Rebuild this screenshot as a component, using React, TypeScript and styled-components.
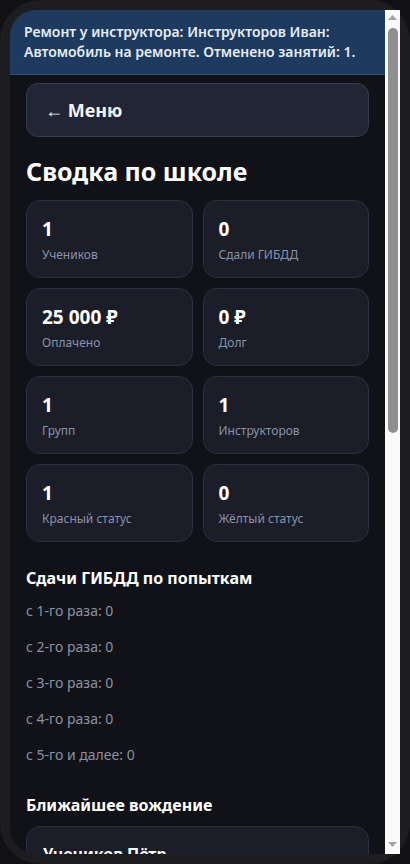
import React from "react";
import styled, { createGlobalStyle } from "styled-components";

const Global = createGlobalStyle`
  html, body { margin: 0; padding: 0; background: #111113; }
  * { box-sizing: border-box; }
  body { font-family: "Noto Sans", "Open Sans", Arial, sans-serif; }
`;

const Frame = styled.div`
  width: 410px;
  height: 864px;
  padding: 10px;
  border-radius: 40px;
  background: #1d1d21;
`;

const Screen = styled.div`
  height: 844px;
  display: flex;
`;

const ScrollArea = styled.div`
  flex: 1;
  min-width: 0;
  overflow-y: auto;
  scrollbar-width: none;
  border-radius: 26px 0 0 26px;
  background: #111217;
  color: #f1f3f8;
  &::-webkit-scrollbar { display: none; }
`;

const Track = styled.div`
  width: 15px;
  flex: none;
  background: #fafafa;
  display: flex;
  flex-direction: column;
  align-items: center;
`;

const ArrowButton = styled.div<{ $down?: boolean }>`
  height: 15px;
  width: 15px;
  flex: none;
  display: flex;
  align-items: ${(p) => (p.$down ? "flex-start" : "center")};
  padding-top: ${(p) => (p.$down ? "3px" : "0")};
  justify-content: center;
`;

const Thumb = styled.div`
  margin-top: 3px;
  width: 10px;
  height: 405px;
  border-radius: 5px;
  background: #8f8f8f;
`;

const Spacer = styled.div`
  flex: 1;
`;

const Banner = styled.div`
  padding: 12px 14px;
  background: #1e3a5f;
  border-bottom: 1px solid #2d5079;
  color: #e4ecf7;
  font-size: 14px;
  line-height: 20px;
  font-weight: 600;
`;

const Content = styled.div`
  padding: 8px 16px 24px;
  display: flex;
  flex-direction: column;
`;

const MenuButton = styled.button`
  display: block;
  width: 100%;
  text-align: left;
  padding: 14px 18px;
  border-radius: 12px;
  border: 1px solid #363b4d;
  background: #222533;
  color: #f1f3f8;
  font-family: inherit;
  font-size: 18px;
  line-height: 24px;
  font-weight: 700;
`;

const Title = styled.h1`
  margin: 18px 0 13px;
  font-size: 25px;
  line-height: 32px;
  font-weight: 700;
  color: #ffffff;
`;

const Grid = styled.div`
  display: grid;
  grid-template-columns: 1fr 1fr;
  gap: 10px;
`;

const Card = styled.div`
  padding: 15px 15px 13px;
  border-radius: 14px;
  border: 1px solid #2b2f40;
  background: #1b1d29;
  display: flex;
  flex-direction: column;
  gap: 4px;
`;

const Value = styled.div`
  font-size: 19px;
  line-height: 26px;
  font-weight: 700;
  color: #ffffff;
`;

const Label = styled.div`
  font-size: 12px;
  line-height: 18px;
  color: #8a93a8;
`;

const SectionTitle = styled.h2<{ $top: number }>`
  margin: ${(p) => p.$top}px 0 0;
  font-size: 16px;
  line-height: 22px;
  font-weight: 700;
  color: #ffffff;
`;

const List = styled.div`
  margin-top: 12px;
  display: flex;
  flex-direction: column;
  gap: 16px;
`;

const Item = styled.div`
  font-size: 14px;
  line-height: 20px;
  color: #8a91a3;
`;

const LessonCard = styled.div`
  margin-top: 10px;
  padding: 16px 16px 14px;
  border-radius: 14px;
  border: 1px solid #2b2f40;
  background: #1b1d29;
  display: flex;
  flex-direction: column;
  gap: 6px;
`;

const LessonName = styled.div`
  font-size: 16px;
  line-height: 22px;
  font-weight: 700;
  color: #ffffff;
`;

const LessonMeta = styled.div`
  font-size: 13px;
  line-height: 18px;
  color: #8a93a8;
`;

const stats = [
  ["1", "Учеников"],
  ["0", "Сдали ГИБДД"],
  ["25 000 ₽", "Оплачено"],
  ["0 ₽", "Долг"],
  ["1", "Групп"],
  ["1", "Инструкторов"],
  ["1", "Красный статус"],
  ["0", "Жёлтый статус"],
];

const attempts = [
  "с 1-го раза: 0",
  "с 2-го раза: 0",
  "с 3-го раза: 0",
  "с 4-го раза: 0",
  "с 5-го и далее: 0",
];

const lessons = [
  ["Учеников Пётр", "Инструктор: Инструкторов Иван", "Завтра, 10:00 · Автодром"],
  ["Учеников Пётр", "Инструктор: Инструкторов Иван", "Пт, 14:00 · Город"],
];

const groups = ["Группа B-1 · 1 ученик", "Теория: Пн, Ср 18:00"];

const Triangle = ({ down }: { down?: boolean }) => (
  <svg width="9" height="5" viewBox="0 0 9 5">
    <path d={down ? "M0 0H9L4.5 5Z" : "M0 5H9L4.5 0Z"} fill="#a3a3a3" />
  </svg>
);

export default function App() {
  return (
    <>
      <Global />
      <Frame>
        <Screen>
          <ScrollArea>
            <Banner>
              Ремонт у инструктора: Инструкторов Иван: Автомобиль на ремонте. Отменено занятий: 1.
            </Banner>
            <Content>
              <MenuButton>← Меню</MenuButton>
              <Title>Сводка по школе</Title>
              <Grid>
                {stats.map(([v, l], i) => (
                  <Card key={i}>
                    <Value>{v}</Value>
                    <Label>{l}</Label>
                  </Card>
                ))}
              </Grid>
              <SectionTitle $top={25}>Сдачи ГИБДД по попыткам</SectionTitle>
              <List>
                {attempts.map((a) => (
                  <Item key={a}>{a}</Item>
                ))}
              </List>
              <SectionTitle $top={29}>Ближайшее вождение</SectionTitle>
              {lessons.map(([n, ins, t], i) => (
                <LessonCard key={i}>
                  <LessonName>{n}</LessonName>
                  <LessonMeta>{ins}</LessonMeta>
                  <LessonMeta>{t}</LessonMeta>
                </LessonCard>
              ))}
              <SectionTitle $top={28}>Группы</SectionTitle>
              <List>
                {groups.map((g) => (
                  <Item key={g}>{g}</Item>
                ))}
              </List>
              <SectionTitle $top={28}>Инструкторы</SectionTitle>
              <LessonCard>
                <LessonName>Инструкторов Иван</LessonName>
                <LessonMeta>Автомобиль на ремонте</LessonMeta>
              </LessonCard>
            </Content>
          </ScrollArea>
          <Track>
            <ArrowButton>
              <Triangle />
            </ArrowButton>
            <Thumb />
            <Spacer />
            <ArrowButton $down>
              <Triangle down />
            </ArrowButton>
          </Track>
        </Screen>
      </Frame>
    </>
  );
}
